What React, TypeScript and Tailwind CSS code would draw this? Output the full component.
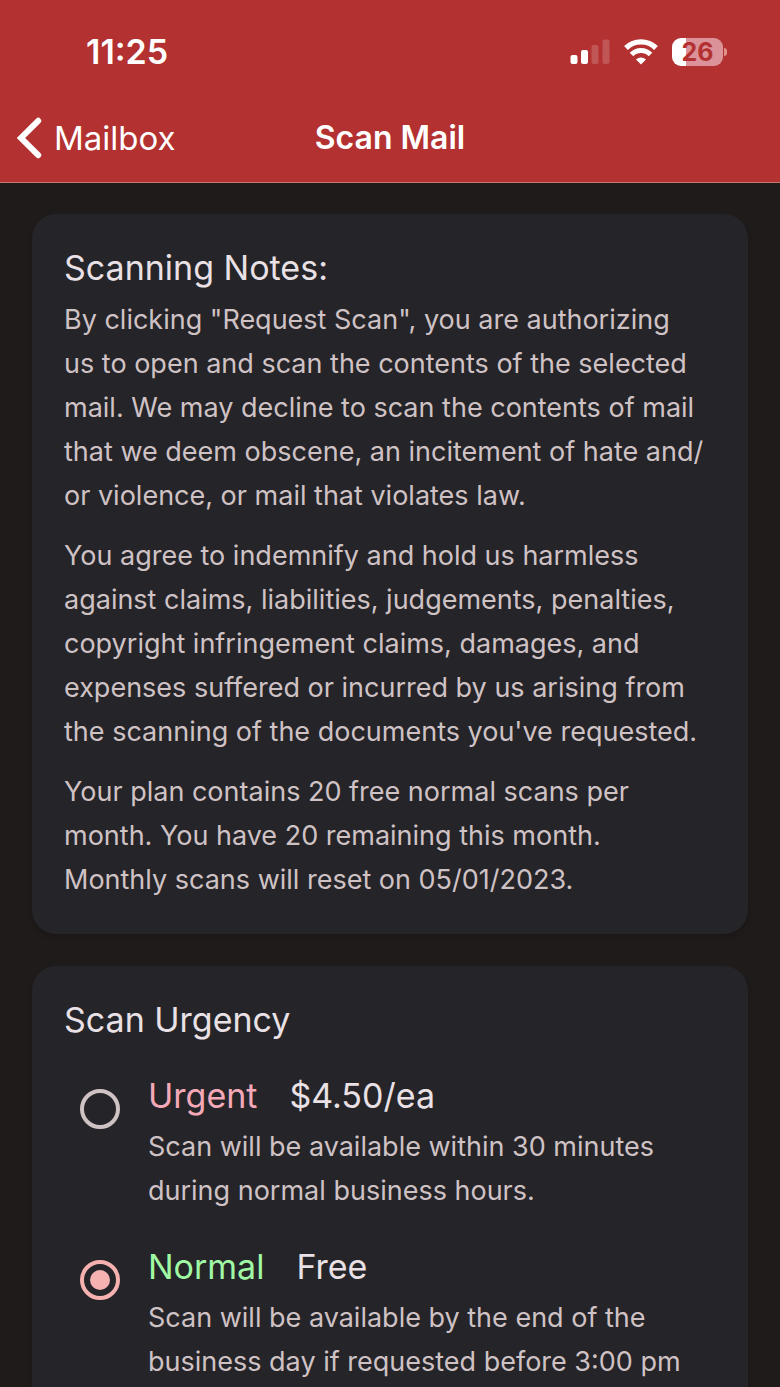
import { useState } from "react";

const notes = [
  'By clicking "Request Scan", you are authorizing us to open and scan the contents of the selected mail. We may decline to scan the contents of mail that we deem obscene, an incitement of hate and/\u200bor violence, or mail that violates law.',
  "You agree to indemnify and hold us harmless against claims, liabilities, judgements, penalties, copyright infringement claims, damages, and expenses suffered or incurred by us arising from the scanning of the documents you've requested.",
  "Your plan contains 20 free normal scans per month. You have 20 remaining this month. Monthly scans will reset on 05/01/2023.",
];

const options = [
  {
    id: "urgent",
    label: "Urgent",
    color: "text-[#f5a9b8]",
    price: "$4.50/ea",
    description:
      "Scan will be available within 30 minutes during normal business hours.",
  },
  {
    id: "normal",
    label: "Normal",
    color: "text-[#a0f8a4]",
    price: "Free",
    description:
      "Scan will be available by the end of the business day if requested before 3:00 pm",
  },
];

function StatusBar() {
  return (
    <div className="flex h-[94px] items-center justify-between pt-2.5 pr-[53px] pl-[86px]">
      <span className="text-[34px] leading-10 font-semibold">11:25</span>
      <div className="flex items-center gap-[14px]">
        <svg width="40" height="26" viewBox="0 0 40 26" fill="#fff" aria-hidden="true">
          <rect x="0.5" y="16" width="7" height="9" rx="2" />
          <rect x="11" y="11" width="7" height="14" rx="2" />
          <rect x="21.5" y="6" width="7" height="19" rx="2" opacity="0.18" />
          <rect x="32.5" y="0.5" width="7" height="24.5" rx="2" opacity="0.18" />
        </svg>
        <svg width="34" height="26" viewBox="0 0 34 26" fill="none" aria-hidden="true">
          <path d="M2 9a21.5 21.5 0 0 1 30 0" stroke="#fff" strokeWidth="5.4" />
          <path d="M7.5 15.4a13.4 13.4 0 0 1 19 0" stroke="#fff" strokeWidth="5" />
          <path d="M17 25.5l-5-5a7.2 7.2 0 0 1 10 0z" fill="#fff" />
        </svg>
        <div className="flex items-center gap-px">
          <div className="flex h-7 w-[51px] items-center justify-center rounded-[9px] bg-linear-to-r from-white from-27% to-[#dc9299] to-27% text-[25px] leading-7 font-bold text-[#b33130]">
            26
          </div>
          <div className="h-2 w-[3px] rounded-r-full bg-[#dc9287]" />
        </div>
      </div>
    </div>
  );
}

function NavBar() {
  return (
    <nav className="grid h-[88px] grid-cols-[1fr_auto_1fr] items-center px-4">
      <button type="button" className="flex items-center gap-3 text-[33px] leading-10">
        <svg width="26" height="42" viewBox="0 0 26 42" fill="none" aria-hidden="true">
          <path
            d="M22.2 3.8L5 21l17.2 17.200"
            stroke="#fff"
            strokeWidth="6"
            strokeLinecap="round"
            strokeLinejoin="miter"
          />
        </svg>
        Mailbox
      </button>
      <h1 className="text-[32px] leading-10 font-semibold">Scan Mail</h1>
    </nav>
  );
}

export default function App() {
  const [urgency, setUrgency] = useState("normal");

  return (
    <div className="flex h-screen flex-col overflow-hidden bg-[#1f1b1a] font-['Inter','Liberation_Sans',sans-serif]">
      <header className="shrink-0 border-b border-[#c9756c] bg-[#b33130] text-white">
        <StatusBar />
        <NavBar />
      </header>

      <main className="min-h-0 flex-1 space-y-8 overflow-hidden px-8 pt-[31px]">
        <section className="rounded-3xl bg-[#252428] p-8 shadow-md">
          <h2 className="mb-2 text-[34px] leading-11 text-[#e9e1e5]">
            Scanning Notes:
          </h2>
          <div className="space-y-4 pr-3 text-[27px] leading-11 text-[#cfc2c5]">
            {notes.map((note) => (
              <p key={note}>{note}</p>
            ))}
          </div>
        </section>

        <section className="rounded-3xl bg-[#252428] p-8 shadow-md">
          <h2 id="urgency" className="mb-8 text-[34px] leading-11 text-[#e9e1e5]">
            Scan Urgency
          </h2>
          <div role="radiogroup" aria-labelledby="urgency" className="space-y-8">
            {options.map((option) => (
              <div key={option.id} className="flex gap-7 pl-4">
                <input
                  type="radio"
                  id={option.id}
                  name="urgency"
                  checked={urgency === option.id}
                  onChange={() => setUrgency(option.id)}
                  className="mt-[15px] size-10 shrink-0 appearance-none rounded-full border-4 border-[#cfc2c5] bg-clip-content p-1.5 checked:border-[#f6b1b1] checked:bg-[#f6b1b1]"
                />
                <label htmlFor={option.id} className="flex-1">
                  <span className="mb-[7px] flex gap-8 text-[34px] leading-11 text-[#e9e1e5]">
                    <span className={option.color}>{option.label}</span>
                    <span>{option.price}</span>
                  </span>
                  <span className="block text-[27px] leading-11 text-[#cfc2c5]">
                    {option.description}
                  </span>
                </label>
              </div>
            ))}
          </div>
        </section>
      </main>
    </div>
  );
}
